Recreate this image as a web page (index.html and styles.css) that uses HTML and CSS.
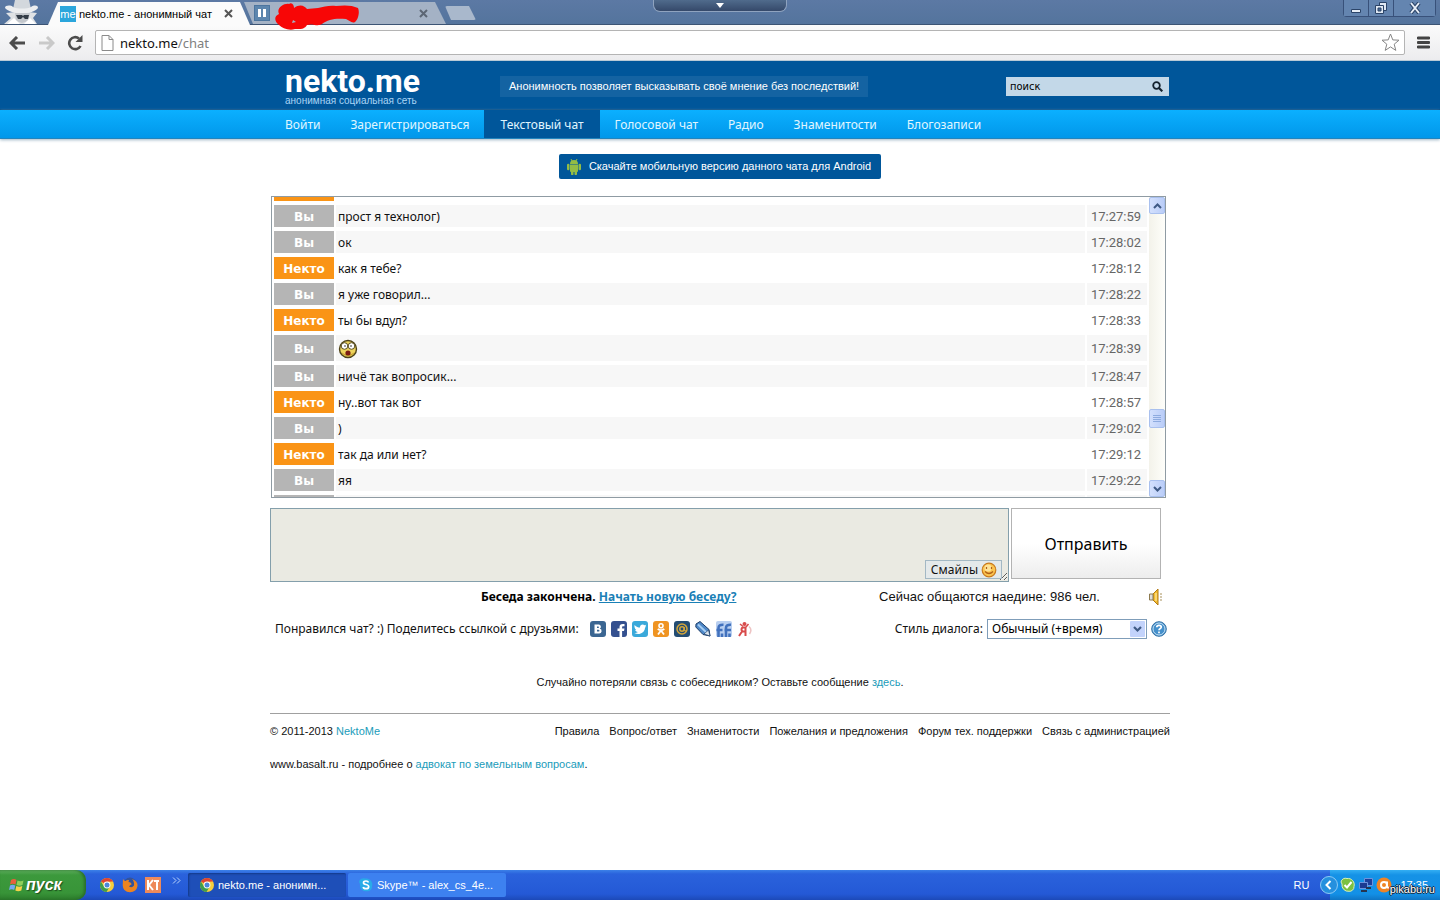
FILE: index.html
```html
<!DOCTYPE html>
<html lang="ru">
<head>
<meta charset="utf-8">
<title>nekto.me - анонимный чат</title>
<link rel="stylesheet" href="styles.css">
</head>
<body>
<svg width="0" height="0" class="defs" aria-hidden="true">
  <symbol id="chrome" viewBox="0 0 16 16">
    <circle cx="8" cy="8" r="7" fill="#f5cf3c"/>
    <path d="M8 8 1.9 4.5A7 7 0 0 1 14.1 4.6L8 4.8z" fill="#dd4433"/>
    <path d="M1.9 4.5A7 7 0 0 0 7.5 15L10.8 9.6 8 8 5 9.6z" fill="#3f9d4c"/>
    <circle cx="8" cy="8" r="3.4" fill="#fff"/><circle cx="8" cy="8" r="2.5" fill="#4a87d8"/>
  </symbol>
</svg>

<div class="tabstrip">
  <svg class="incognito" width="37" height="24" viewBox="0 0 37 24">
    <path d="M1 24 8 18 3 13 12 12H26L34 13 30 18 34 24z" fill="#dfe2e5"/>
    <path d="M10 9 12 0H26L28 9z" fill="#d3d8dd"/>
    <path d="M2 8C8 15 30 15 35 8 35 5 31 5 28 7 24 9 14 9 10 7 8 5 2 5 2 8z" fill="#eceef0"/>
    <path d="M12 13H27L25 21 19 23 13 21z" fill="#c3c7cc"/>
    <path d="M13 15h6l1 1 1-1h5l-1 4h-3l-2-2-2 2h-3z" fill="#333c47"/>
    <path d="M4 24 11 18 17 24zM33 24 27 18 21 24z" fill="#fff"/>
  </svg>
  <div class="tab tab-active">
    <span class="fav">me</span><span class="tab-title">nekto.me - анонимный чат</span>
    <button class="tab-close" aria-label="Закрыть вкладку"><svg width="9" height="9" viewBox="0 0 9 9"><path d="M1 1 8 8M8 1 1 8" stroke="#555" stroke-width="2"/></svg></button>
  </div>
  <div class="tab tab-idle">
    <svg class="vk" width="16" height="16" viewBox="0 0 16 16"><path d="M0 0H16V16H0z" fill="#4c759f"/><path d="M1 1H15V15H1z" fill="#5d86ae"/><path d="M4 4h3v8H4zM9 4h3v8H9z" fill="#fff"/></svg>
    <svg class="scribble" width="86" height="28" viewBox="0 0 86 28"><path d="M5 12C2 6 10 1 15 2 18 0 20 3 20 6 27 1 31 5 33 7L44 6C50 5 55 3 62 4 70 3 78 3 84 6 86 10 84 18 81 20 78 22 75 18 72 17 62 16 54 17 48 22 43 25 39 21 33 23 30 28 25 27 21 27 15 29 8 26 5 23 0 19 0 14 5 12zM18 21 22 20 19 18z" fill="#f80606"/></svg>
    <button class="tab-close" aria-label="Закрыть вкладку"><svg width="9" height="9" viewBox="0 0 9 9"><path d="M1 1 8 8M8 1 1 8" stroke="#5c6674" stroke-width="2"/></svg></button>
  </div>
  <button class="new-tab" aria-label="Новая вкладка"></button>
  <div class="win-buttons">
    <button aria-label="Свернуть"><svg width="12" height="12" viewBox="0 0 12 12"><path d="M1.500 7.500h9v3h-9z" fill="#e7eef7" stroke="#2b4468"/></svg></button>
    <button aria-label="Восстановить"><svg width="14" height="14" viewBox="0 0 14 14"><path d="M5.500 1.500h7v8h-7z" fill="#dfe8f3" stroke="#2b4468"/><path d="M1.500 4.500h8v8h-8z" fill="#dfe8f3" stroke="#2b4468"/><path d="M4 7h3v3H4z" fill="#4b6b95" stroke="#2b4468"/></svg></button>
    <button class="wide" aria-label="Закрыть"><svg width="12" height="12" viewBox="0 0 12 12"><path d="M2 1 10 11M10 1 2 11" stroke="#2b4468" stroke-width="4"/><path d="M2 1 10 11M10 1 2 11" stroke="#e7eef7" stroke-width="2"/></svg></button>
  </div>
  <button class="pulldown" aria-label="Показать панель"><svg width="8" height="5" viewBox="0 0 8 5"><path d="M0 0h8L4 5z" fill="#fff"/></svg></button>
</div>

<div class="toolbar">
  <button class="tool" aria-label="Назад"><svg width="17" height="14" viewBox="0 0 17 14"><path d="M8 1 2 7l6 6M2 7h14" fill="none" stroke="#4c4c4c" stroke-width="3"/></svg></button>
  <button class="tool" aria-label="Вперёд"><svg width="17" height="14" viewBox="0 0 17 14"><path d="M9 1l6 6-6 6M15 7H1" fill="none" stroke="#c9c9c9" stroke-width="3"/></svg></button>
  <button class="tool" aria-label="Обновить"><svg width="17" height="16" viewBox="0 0 17 16"><path d="M13.500 11A6 6 0 1 1 12 3.500" fill="none" stroke="#4c4c4c" stroke-width="2.600"/><path d="M15.500 0v7h-7z" fill="#4c4c4c"/></svg></button>
  <div class="omnibox">
    <svg width="13" height="16" viewBox="0 0 13 16"><path d="M1 .5h7l4 4v11H1zM8 .5v4h4" fill="#fff" stroke="#8a8a8a"/></svg>
    <span class="url">nekto.me<span class="path">/chat</span></span>
    <svg width="19" height="19" viewBox="0 0 19 19"><path d="M9.500 1l2.300 5.900 6.200.3-4.800 4 1.600 6.200-5.300-3.500-5.300 3.500 1.600-6.200-4.800-4 6.200-.3z" fill="#fff" stroke="#858585"/></svg>
  </div>
  <button class="tool" aria-label="Меню"><svg width="13" height="13" viewBox="0 0 13 13"><path d="M1 2h11M1 6.500h11M1 11h11" stroke="#444" stroke-width="2.800" stroke-linecap="round"/></svg></button>
</div>

<header class="header">
  <div class="wrap header-row">
    <a class="logo" href="#"><span class="logo-name">nekto.me</span><span class="logo-tag">анонимная социальная сеть</span></a>
    <p class="slogan">Анонимность позволяет высказывать своё мнение без последствий!</p>
    <form class="search">
      <input type="text" value="поиск" aria-label="Поиск">
      <button type="button" aria-label="Найти"><svg width="11" height="11" viewBox="0 0 11 11"><circle cx="4.500" cy="4.500" r="3.300" fill="none" stroke="#14222e" stroke-width="1.800"/><path d="M7 7l3.300 3.300" stroke="#14222e" stroke-width="2.200"/></svg></button>
    </form>
  </div>
</header>
<nav class="nav">
  <div class="wrap nav-row">
    <a href="#">Войти</a><a href="#">Зарегистрироваться</a><a href="#" class="on">Текстовый чат</a><a href="#">Голосовой чат</a><a href="#">Радио</a><a href="#">Знаменитости</a><a href="#">Блогозаписи</a>
  </div>
</nav>

<main class="wrap main">
  <a class="android" href="#">
    <svg width="14" height="16" viewBox="0 0 14 16"><path d="M3 5a4 4 0 0 1 8 0zM3 5.500h8v6.500a1 1 0 0 1-1 1H4a1 1 0 0 1-1-1zM0 6a1 1 0 0 1 2.500 0v4a1 1 0 0 1-2.500 0zM11.500 6a1 1 0 0 1 2.500 0v4a1 1 0 0 1-2.500 0zM4 12h2.500v3a1 1 0 0 1-2.500 0zM7.500 12H10v3a1 1 0 0 1-2.500 0z" fill="#93bd45"/><path d="M4 0l1 2M10 0 9 2" stroke="#93bd45"/></svg>
    Скачайте мобильную версию данного чата для Android
  </a>

  <section class="chat" aria-label="Сообщения">
    <div class="chat-view">
      <table class="log">
        <tr class="he"><th></th><td></td><td class="time"></td></tr>
        <tr class="me"><th>Вы</th><td>прост я технолог)</td><td class="time">17:27:59</td></tr>
        <tr class="me"><th>Вы</th><td>ок</td><td class="time">17:28:02</td></tr>
        <tr class="he"><th>Некто</th><td>как я тебе?</td><td class="time">17:28:12</td></tr>
        <tr class="me"><th>Вы</th><td>я уже говорил...</td><td class="time">17:28:22</td></tr>
        <tr class="he"><th>Некто</th><td>ты бы вдул?</td><td class="time">17:28:33</td></tr>
        <tr class="me tall"><th>Вы</th><td><svg width="20" height="20" viewBox="0 0 20 20"><circle cx="10" cy="10" r="8.500" fill="#edd35c" stroke="#4d4218" stroke-width="1.400"/><path d="M3 13a8 8 0 0 0 14 0q-7 5-14 0z" fill="#c9a431"/><circle cx="6.500" cy="7" r="3.300" fill="#fff" stroke="#5b4f22"/><circle cx="13.500" cy="7" r="3.300" fill="#fff" stroke="#5b4f22"/><circle cx="7" cy="7" r=".8" fill="#222"/><circle cx="13" cy="7" r=".8" fill="#222"/><ellipse cx="10" cy="14" rx="2.600" ry="2.500" fill="#7c1d12"/></svg></td><td class="time">17:28:39</td></tr>
        <tr class="me"><th>Вы</th><td>ничё так вопросик...</td><td class="time">17:28:47</td></tr>
        <tr class="he"><th>Некто</th><td>ну..вот так вот</td><td class="time">17:28:57</td></tr>
        <tr class="me"><th>Вы</th><td>)</td><td class="time">17:29:02</td></tr>
        <tr class="he"><th>Некто</th><td>так да или нет?</td><td class="time">17:29:12</td></tr>
        <tr class="me"><th>Вы</th><td>яя</td><td class="time">17:29:22</td></tr>
        <tr class="me"><th></th><td></td><td class="time"></td></tr>
      </table>
    </div>
    <div class="bar">
      <button class="bar-btn" aria-label="Вверх"><svg width="9" height="6" viewBox="0 0 9 6"><path d="M1 5l3.500-3.500L8 5" fill="none" stroke="#3f5a85" stroke-width="2"/></svg></button>
      <div class="bar-before"></div>
      <div class="thumb"><svg width="8" height="8" viewBox="0 0 8 8"><path d="M0 .5h8M0 2.500h8M0 4.500h8M0 6.500h8" stroke="#8eabdf"/></svg></div>
      <div class="bar-after"></div>
      <button class="bar-btn" aria-label="Вниз"><svg width="9" height="6" viewBox="0 0 9 6"><path d="M1 1l3.500 3.500L8 1" fill="none" stroke="#3f5a85" stroke-width="2"/></svg></button>
    </div>
  </section>

  <form class="compose">
    <div class="field">
      <textarea aria-label="Сообщение" disabled></textarea>
      <button type="button" class="smiles">Смайлы <svg width="16" height="16" viewBox="0 0 16 16"><circle cx="8" cy="8" r="6.800" fill="#fbc44f" stroke="#c97a1c" stroke-width="1.200"/><circle cx="7" cy="6" r="3.500" fill="#fde39a"/><path d="M5.500 5v2M10.500 5v2M4 9.500q4 4 8 0" fill="none" stroke="#b0601a" stroke-width="1.200"/></svg></button>
    </div>
    <button type="button" class="send">Отправить</button>
  </form>

  <div class="line status">
    <p class="ended">Беседа закончена. <a href="#">Начать новую беседу?</a></p>
    <p class="online">Сейчас общаются наедине: 986 чел.</p>
    <button class="plain" aria-label="Звук"><svg width="16" height="18" viewBox="0 0 16 18"><path d="M5 6l5-5v16l-5-5z" fill="#f6bd2e" stroke="#b07914"/><path d="M1.500 6H5v6H1.500z" fill="#dcdcdc" stroke="#8d7a4e"/><path d="M8 5v8" stroke="#fbe08c" stroke-width="1.500"/><path d="M12 6h2M12 9h2M12 12h2" stroke="#a8905a"/></svg></button>
  </div>

  <div class="line share">
    <p>Понравился чат? :) Поделитесь ссылкой с друзьями:</p>
    <div class="socials">
      <a href="#" aria-label="ВКонтакте"><svg viewBox="0 0 16 16"><rect width="16" height="16" rx="3" fill="#3b6692"/><path d="M4.500 3.500h4.300a2.200 2.200 0 0 1 1 4.100 2.500 2.500 0 0 1-.8 4.900H4.500zM7 5.400v1.600h1.200a.8.8 0 0 0 0-1.600zM7 8.700v1.900h1.500a.95.95 0 0 0 0-1.900z" fill="#fff" fill-rule="evenodd"/></svg></a>
      <a href="#" aria-label="Facebook"><svg viewBox="0 0 16 16"><rect width="16" height="16" rx="3" fill="#34508f"/><path d="M8.500 16V10H6.500V7.500h2V6c0-2.500 1.500-3.500 5-3v2.200c-2-.2-2.400 0-2.400 1v1.300h2.400L13 10h-1.900v6z" fill="#fff"/></svg></a>
      <a href="#" aria-label="Twitter"><svg viewBox="0 0 16 16"><rect width="16" height="16" rx="3" fill="#3aa9da"/><path d="M2.500 4c2 2 3.500 2.500 5.500 2.600C7.800 3.500 11 2.500 12.500 4.300l1.700-.5-1 1.600 1 0-1.200 1.300C12.800 12 7 14.500 2.300 12c1.800 0 2.700-.4 3.500-1.100-1.500-.2-2.300-1-2.600-2h1C2.800 8 2.200 6 2.500 4z" fill="#fff"/></svg></a>
      <a href="#" aria-label="Одноклассники"><svg viewBox="0 0 16 16"><rect width="16" height="16" rx="3" fill="#ef9422"/><circle cx="8" cy="4.700" r="2" fill="none" stroke="#fff" stroke-width="1.600"/><path d="M4.700 8q3.300 2.200 6.600 0M8 9.500 5 13.500M8 9.500l3 4" fill="none" stroke="#fff" stroke-width="1.800"/></svg></a>
      <a href="#" aria-label="Мой Мир"><svg viewBox="0 0 16 16"><rect width="16" height="16" rx="3" fill="#234c72"/><circle cx="8" cy="8" r="5" fill="none" stroke="#d3a63a" stroke-width="1.500"/><circle cx="8" cy="8" r="2.200" fill="none" stroke="#d3a63a" stroke-width="1.500"/><path d="M10.300 6v3q1 1.500 2 .5" fill="none" stroke="#d3a63a" stroke-width="1.200"/></svg></a>
      <a href="#" aria-label="LiveJournal"><svg viewBox="0 0 16 16"><path d="M1 3 5 .5l9 8L15 15l-7-1.500L.8 6z" fill="#4f88c8" stroke="#1c3d68"/><path d="M3 3.500l8.500 8" stroke="#a6cdf2" stroke-width="2"/><path d="M9 13 13.500 9l1.500 6z" fill="#dce5ee" stroke="#1c3d68" stroke-width=".7"/></svg></a>
      <a href="#" aria-label="FriendFeed"><svg viewBox="0 0 16 16"><rect width="16" height="16" rx="2" fill="#b9cff0"/><path d="M2.500 16V7q0-3.500 5-3.200M.5 9h6M10 16V7q0-3.500 5-3.200M8.500 9H15M6 16v-3.500M13.500 16v-3.500" fill="none" stroke="#4171bd" stroke-width="2.600"/></svg></a>
      <a href="#" aria-label="Я.ру"><svg viewBox="0 0 16 16"><path d="M2 15 5 10.500M8.500 15V6.500H6.500a2 2 0 0 0 0 4h2" fill="none" stroke="#d84b4b" stroke-width="2"/><path d="M3 3l3 2.500M9 6l2.500-3" stroke="#d84b4b" stroke-width="1.500"/><circle cx="7.500" cy="3" r="2" fill="#d84b4b"/><path d="M12 5.500q3.500 3 .5 7.500" fill="none" stroke="#edc3c3" stroke-width="1.500"/></svg></a>
    </div>
    <div class="style">
      <label for="style">Стиль диалога:</label>
      <span class="select"><select id="style"><option>Обычный (+время)</option></select><svg class="select-arrow" width="15" height="16" viewBox="0 0 15 16"><rect width="15" height="16" rx="1" fill="#c3d3fb"/><path d="M4 6l3.500 3.500L11 6" fill="none" stroke="#3f5a85" stroke-width="2.200"/></svg></span>
      <button class="plain" aria-label="Помощь"><svg width="16" height="16" viewBox="0 0 16 16"><circle cx="8" cy="8" r="7.300" fill="#4590cb" stroke="#3371a5"/><circle cx="8" cy="8" r="6" fill="none" stroke="#c5e0f4"/><path d="M5.800 6.300q0-2 2.200-2 2.300 0 2.300 1.800 0 1-1.300 1.700-1 .6-1 1.500M8 10.600v1.700" fill="none" stroke="#fff" stroke-width="1.700"/></svg></button>
    </div>
  </div>

  <p class="lost">Случайно потеряли связь с собеседником? Оставьте сообщение <a href="#">здесь</a>.</p>

  <footer class="footer">
    <div class="footer-row">
      <p>© 2011-2013 <a href="#">NektoMe</a></p>
      <div class="footer-links"><a href="#">Правила</a><a href="#">Вопрос/ответ</a><a href="#">Знаменитости</a><a href="#">Пожелания и предложения</a><a href="#">Форум тех. поддержки</a><a href="#">Связь с администрацией</a></div>
    </div>
    <p>www.basalt.ru - подробнее о <a href="#">адвокат по земельным вопросам</a>.</p>
  </footer>
</main>

<div class="taskbar">
  <button class="start"><svg width="16" height="16" viewBox="0 0 16 16"><path d="M2 3q3-2 5.500 0L6.500 7.500q-3-1.500-5.500 0z" fill="#e8603c"/><path d="M8.500 3.500q3 1.500 6 0l-1 4.500q-3 1.500-6 0z" fill="#8fd05a"/><path d="M1 8.500q2.500-1.500 5.300 0L5.200 13q-2.500-1.500-5.200 0z" fill="#76a8f0"/><path d="M7.300 9q3 1.500 6 0l-1 4.500q-3 1.500-6 0z" fill="#f7d24a"/></svg>пуск</button>
  <div class="quick">
    <svg width="16" height="16"><use href="#chrome"/></svg>
    <svg width="16" height="16" viewBox="0 0 16 16"><circle cx="8" cy="7" r="6.500" fill="#33539b"/><path d="M1 2q1 2 2.500 2Q5 2.500 7 3L6.500 5q3 0 3 2.500Q8 8 7 9.500q3 2 5-1 .5-4-2-6.500 6 2 5.500 7-1 6-7.500 6.300Q1 15 .7 8.500z" fill="#ec8420"/></svg>
    <svg width="16" height="16" viewBox="0 0 16 16"><rect width="16" height="16" fill="#ee8a5a"/><path d="M3 3v10M8 3 4 8l4 5M9 4h5M12 4v9" fill="none" stroke="#fff" stroke-width="2"/></svg>
    <svg class="more" width="9" height="7" viewBox="0 0 9 7"><path d="M1 .5l3 3-3 3M5 .5l3 3-3 3" fill="none" stroke="#b9d3fb"/></svg>
  </div>
  <button class="task task-on"><svg width="16" height="16"><use href="#chrome"/></svg>nekto.me - анонимн...</button>
  <button class="task"><svg width="16" height="16" viewBox="0 0 16 16"><path d="M1 5a4.500 4.500 0 0 1 6-3.500 6.300 6.300 0 0 1 7 8A4.500 4.500 0 0 1 9 14.300 6.300 6.300 0 0 1 2 7z" fill="#29abe8"/><path d="M10.500 5.500Q10 4 8 4 5.500 4 5.500 5.700 5.500 7 8 7.500q2.700.6 2.700 2.200Q10.700 11.700 8 11.700 5.500 11.700 5.200 10" fill="none" stroke="#fff" stroke-width="1.700"/></svg>Skype™ - alex_cs_4e...</button>
  <span class="lang">RU</span>
  <div class="tray">
    <svg class="tray-toggle" width="18" height="18" viewBox="0 0 18 18"><circle cx="9" cy="9" r="8.500" fill="#2590de" stroke="#8dcbf5"/><path d="M10.500 5 6.500 9l4 4" fill="none" stroke="#fff" stroke-width="2"/></svg>
    <svg width="16" height="16" viewBox="0 0 16 16"><path d="M1 5a4.500 4.500 0 0 1 6-3.500 6.300 6.300 0 0 1 7 8A4.500 4.500 0 0 1 9 14.300 6.300 6.300 0 0 1 2 7z" fill="#7cc142" stroke="#d8f0b8"/><path d="M4.500 8l2.500 2.500L11.500 5" fill="none" stroke="#fff" stroke-width="2"/></svg>
    <svg width="16" height="16" viewBox="0 0 16 16"><path d="M6.500 1.500h8v7h-8z" fill="#1d3f9b" stroke="#6d93dc"/><path d="M1.500 5.500h8v6h-8z" fill="#1b3a91" stroke="#6d93dc"/><path d="M3 14h6M8 11h5" stroke="#26354f" stroke-width="2"/></svg>
    <svg width="16" height="16" viewBox="0 0 16 16"><circle cx="8" cy="8" r="7.500" fill="#ef8425"/><circle cx="8" cy="8" r="3" fill="none" stroke="#fff" stroke-width="2"/><path d="M11 4.500V9q0 2 2 1.500" fill="none" stroke="#fff" stroke-width="2"/></svg>
    <span class="clock">17:35</span>
  </div>
  <span class="mark">pikabu.ru</span>
</div>
</body>
</html>
```
FILE: styles.css
```css
* { box-sizing: border-box; }
body {
  margin: 0;
  min-height: 100vh;
  display: flex;
  flex-direction: column;
  background: #fff;
  color: #111;
  font: 12px/16px "Noto Sans", "DejaVu Sans Condensed", sans-serif;
}
p { margin: 0; }
a { color: #16a; text-decoration: none; }
button { padding: 0; border: 0; background: none; color: inherit; font: inherit; }
svg { flex: none; display: block; }
.defs { position: absolute; }
.wrap { width: 100%; max-width: 900px; margin: 0 auto; }

/* browser window */
.tabstrip {
  position: relative;
  z-index: 1;
  display: flex;
  height: 25px;
  padding-left: 3px;
  background: linear-gradient(#5c79a4, #54749d);
  border-bottom: 1px solid #3c5474;
}
.incognito { margin-right: 8px; }
.tab {
  display: flex;
  align-items: center;
  height: 22px;
  margin-top: 2px;
  font: 11px/16px "Liberation Sans", sans-serif;
}
.tab-active {
  width: 202px;
  height: 23px;
  padding: 0 17px 0 12px;
  gap: 3px;
  background: #fbfbfb;
  clip-path: polygon(0 100%, 10px 0, 192px 0, 100% 100%);
}
.fav {
  width: 16px;
  background: #2ba6dc;
  color: #fff;
  text-align: center;
}
.tab-title { flex: 1; white-space: nowrap; color: #000; }
.tab-idle {
  position: relative;
  width: 202px;
  margin-left: -6px;
  padding: 0 18px 0 10px;
  gap: 4px;
}
.tab-idle::before {
  content: "";
  position: absolute;
  inset: 0;
  background: #a4b2c5;
  clip-path: polygon(0 0, 191px 0, 100% 100%, 9px 100%);
}
.tab-idle .vk { position: relative; }
.tab-close { position: relative; display: flex; }
.tab-idle .tab-close { margin-left: auto; }
.scribble { position: relative; align-self: flex-start; }
.new-tab {
  width: 31px;
  height: 14px;
  margin: 6px 0 0 -1px;
  background: #a9b8cc;
  border-radius: 2px;
  clip-path: polygon(0 0, 24px 0, 100% 100%, 6px 100%);
}
.win-buttons { display: flex; margin: 0 4px 0 auto; height: 17px; border: 1px solid #38517a; border-top: 0; border-radius: 0 0 4px 4px; }
.win-buttons button { width: 25px; display: grid; place-items: center; border-right: 1px solid #38517a; background: #6485b0; }
.win-buttons .wide { width: 41px; border-right: 0; }
.pulldown {
  position: absolute;
  top: 0;
  left: 50%;
  width: 134px;
  height: 12px;
  margin-left: -67px;
  display: grid;
  place-items: center;
  background: linear-gradient(#506b8c, #35496a);
  border: 1px solid #8fa3bf;
  border-top: 0;
  border-radius: 0 0 7px 7px;
}
.toolbar {
  display: flex;
  align-items: center;
  gap: 12px;
  height: 36px;
  padding: 0 10px 0 9px;
  background: linear-gradient(#fbfbfb, #ececee);
  border-bottom: 1px solid #b9cad6;
}
.tool { display: flex; }
.omnibox {
  flex: 1;
  display: flex;
  align-items: center;
  gap: 6px;
  height: 25px;
  margin-left: -1px;
  padding: 0 4px 0 5px;
  background: #fff;
  border: 1px solid #b4b4b4;
  border-radius: 2px;
  font-size: 13px;
}
.url { flex: 1; color: #111; }
.path { color: #808080; }

/* site header */
.header { background: #00569a; border-bottom: 1px solid #004c87; }
.header-row { display: flex; align-items: center; height: 48px; padding: 3px 1px 0 15px; }
.logo { display: flex; flex-direction: column; width: 215px; color: #fff; }
.logo-name { font: bold 32px/29px Roboto, sans-serif; }
.logo-tag { color: #a9d4f5; font: 10px/10px "Liberation Sans", sans-serif; }
.slogan {
  padding: 2px 9px;
  background: #1463a2;
  color: #fff;
  font: 11px/17px "Liberation Sans", sans-serif;
}
.search { display: flex; align-items: center; width: 163px; height: 19px; margin-left: auto; padding-right: 6px; background: #c3d8e8; }
.search input { flex: 1; min-width: 0; height: 19px; padding: 0 4px; border: 0; background: none; color: #000; font: 11px/16px "DejaVu Sans Condensed", sans-serif; }
.search button { display: flex; }
.nav { background: linear-gradient(#0bb0ff, #0197ea); border-bottom: 1px solid #2384bd; box-shadow: 0 1px 3px #9fb6c6; }
.nav-row { display: flex; }
.nav a { padding: 2px 15px 0; color: #e0f6ff; line-height: 26px; }
.nav .on { padding: 2px 16px 0; background: #00569a; }

/* chat */
.main { flex: 1; display: flex; flex-direction: column; padding-top: 15px; }
.android {
  align-self: center;
  display: flex;
  align-items: center;
  gap: 8px;
  padding: 4px 10px 4px 8px;
  border-radius: 2px;
  background: #00569a;
  color: #fff;
  font: 11px/17px "Liberation Sans", sans-serif;
}
.chat { display: flex; height: 302px; margin: 17px 4px 0 1px; border: 1px solid #8f9ba3; }
.chat-view { flex: 1; overflow: hidden; }
.log { width: 100%; margin-top: -22px; border-collapse: separate; border-spacing: 2px 4px; table-layout: fixed; }
.log th, .log td { height: 22px; padding: 2px 2px 0; line-height: 18px; }
.log th { width: 60px; color: #fff; font: bold 12px/18px "DejaVu Sans", sans-serif; }
.log .time { width: 60px; padding-right: 4px; color: #666; text-align: center; font: 13px/18px Roboto, sans-serif; }
.me th { background: #b5b5b5; }
.he th { background: #fa9416; }
.me td { background: #f7f7f7; }
.log .tall th, .log .tall td { height: 26px; }
.bar { display: flex; flex-direction: column; width: 16px; background: linear-gradient(90deg, #f3f2ea, #fefefa); }
.bar-btn, .thumb {
  display: grid;
  place-items: center;
  height: 17px;
  background: linear-gradient(90deg, #d3e0fd, #bacdf8);
  border: 1px solid #a9c0ee;
  border-radius: 2px;
}
.thumb { height: 19px; }
.bar-before { flex: 195; }
.bar-after { flex: 52; }

.compose { display: flex; align-items: flex-start; gap: 2px; margin: 10px 9px 0 0; }
.field { position: relative; flex: 1; display: flex; }
.field textarea { flex: 1; height: 74px; border: 1px solid #849fab; background: #eaeae2; resize: vertical; }
.smiles {
  position: absolute;
  right: 7px;
  bottom: 3px;
  display: flex;
  align-items: center;
  gap: 3px;
  height: 19px;
  padding: 0 4px 0 5px;
  border: 1px solid #a3b8c4;
  background: #e4e9ea;
}
.send { width: 150px; height: 71px; border: 1px solid #b3b3b3; background: linear-gradient(#fff 50%, #ededed); color: #000; font-size: 16px; }

.line { display: flex; align-items: center; }
.status { margin-top: 5px; height: 20px; padding: 0 6px 0 211px; }
.ended { color: #000; font-weight: bold; }
.ended a { color: #1a80b6; text-decoration: underline; }
.online { margin-left: auto; margin-right: 48px; font: 13px/16px "Liberation Sans", sans-serif; }
.plain { display: flex; }
.share { height: 20px; margin-top: 12px; padding: 0 3px 0 5px; }
.socials { display: flex; gap: 5px; margin-left: 11px; }
.socials svg { width: 16px; height: 16px; }
.style { display: flex; align-items: center; gap: 4px; margin-left: auto; }
.select { position: relative; display: flex; }
.select select {
  appearance: none;
  width: 160px;
  height: 20px;
  padding: 0 4px;
  border: 1px solid #7f9db9;
  border-radius: 0;
  background: #fff;
  color: #000;
  font: 12px/16px "Noto Sans", sans-serif;
}
.select-arrow { position: absolute; right: 2px; top: 2px; pointer-events: none; }

.lost { margin-top: 35px; text-align: center; font: 11px/16px "Liberation Sans", sans-serif; }
.lost a, .footer p a { color: #1b9cba; }
.footer { margin-top: 23px; padding-top: 9px; border-top: 1px solid #a0a0a0; font: 11px/16px "Liberation Sans", sans-serif; }
.footer-row { display: flex; justify-content: space-between; margin-bottom: 17px; }
.footer-links { display: flex; gap: 10px; }
.footer-links a { color: #111; }

/* taskbar */
.taskbar {
  position: relative;
  display: flex;
  align-items: center;
  height: 30px;
  background: linear-gradient(#3c81e8 0, #2a62dc 4px, #2459d6 24px, #1c49b8);
  color: #fff;
  font: 11px/16px "Liberation Sans", sans-serif;
}
.start {
  display: flex;
  align-items: center;
  gap: 1px;
  width: 86px;
  height: 30px;
  padding-left: 9px;
  border-radius: 0 10px 10px 0;
  background: linear-gradient(#5fae5f 0, #3c993c 5px, #389438 23px, #2b7a2b);
  box-shadow: inset -2px 0 3px #2a6d2a;
  font: italic bold 16px/20px "Liberation Sans", sans-serif;
  text-shadow: 1px 1px 1px #1c4d1c;
}
.quick { display: flex; align-items: center; gap: 7px; margin: 0 7px 0 13px; }
.more { align-self: flex-start; margin-left: 4px; }
.task {
  display: flex;
  align-items: center;
  gap: 3px;
  width: 158px;
  height: 24px;
  margin-right: 2px;
  padding-left: 10px;
  border-radius: 2px;
  background: #3d81f0;
}
.task-on { padding-left: 11px; background: #1e4fb8; box-shadow: inset 1px 1px 2px #143a88; }
.lang { margin-left: auto; }
.tray {
  display: flex;
  align-items: center;
  gap: 2px;
  height: 30px;
  margin-left: 21px;
  padding-right: 12px;
  background: linear-gradient(#33aef3 0, #1592e6 5px, #1390e6 24px, #0f75c4);
}
.tray-toggle { margin-left: -10px; }
.clock { margin-left: 6px; }
.mark { position: absolute; right: 5px; bottom: 3px; color: #fff; text-shadow: 1px 0 #123, -1px 0 #123, 0 1px #123, 0 -1px #123; }
```
